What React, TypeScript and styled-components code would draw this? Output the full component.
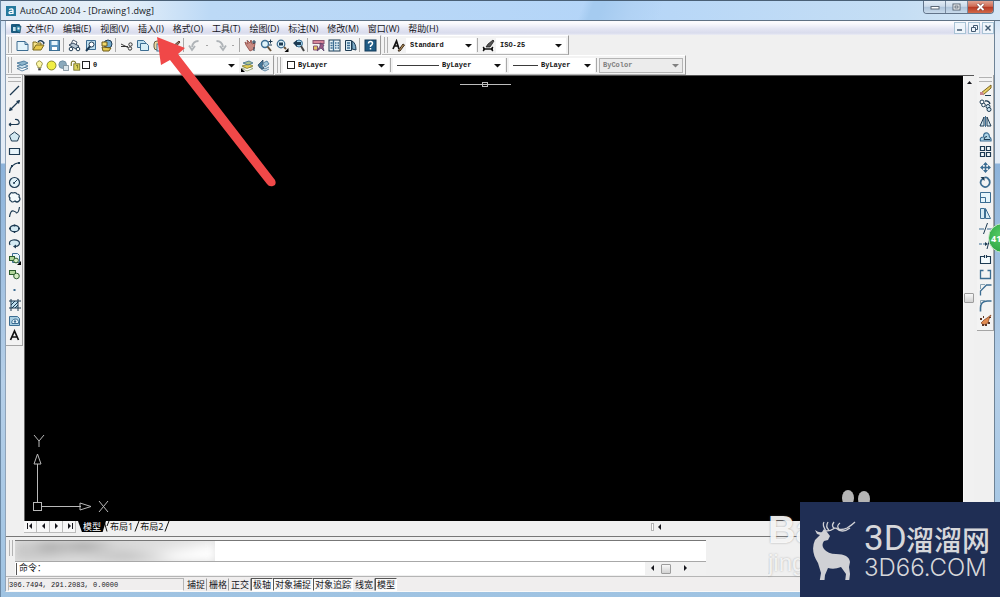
import React from 'react';
import styled, { createGlobalStyle } from 'styled-components';

const GlobalStyle = createGlobalStyle`
  * { box-sizing: border-box; }
  html, body { margin: 0; height: 100%; overflow: hidden; }
  body { font-family: "Open Sans", "Noto Sans CJK SC", sans-serif; color: #16161c; }
  button, select, input { font: inherit; color: inherit; margin: 0; padding: 0; border: 0; background: none; }
  svg { display: block; flex: none; }
`;

const MONO = '"Liberation Mono", "Noto Sans CJK SC", monospace';

const Window = styled.div`
  position: relative;
  min-height: 100vh;
  overflow: hidden;
  display: flex;
  flex-direction: column;
  padding: 0 5px 5px 4px;
  border-top: 1px solid #4a6076;
  border-left: 1px solid #6d8aa6;
  background: linear-gradient(180deg, #b9d7f5 0, #e3ecf6 34px, #e3ecf6 162px, #8db3da 163px, #b5cfe8 380px, #9fc3e2 100%);
`;

const TitleBar = styled.header`
  height: 20px;
  margin: 0 -5px 0 -4px;
  padding: 0 6px 0 5px;
  display: flex;
  align-items: center;
  border-bottom: 1px solid #5f7285;
  background:
    linear-gradient(110deg, transparent 0 58%, #a5cbf0 59% 60%, #b1d2f4 63%, transparent 66%),
    linear-gradient(90deg, #dce9f5 0, #e6f0f9 120px, #bcd9f6 210px, #b4d5f8 60%, #c5def4 90%, #d5e6f5);
`;

const Title = styled.h1`
  margin: 0;
  flex: 1;
  padding-left: 4px;
  font-size: 9px;
  line-height: 18px;
  font-weight: 400;
  color: #14181c;
`;

const CaptionButtons = styled.div`
  display: flex;
  align-self: flex-start;
  height: 13px;
  border: 1px solid #62748a;
  border-top: 0;
  border-radius: 0 0 4px 4px;
  overflow: hidden;
`;

const CaptionButton = styled.button<{ $close?: boolean }>`
  width: ${p => (p.$close ? 25 : 22)}px;
  display: grid;
  place-items: center;
  border-right: ${p => (p.$close ? 0 : 1)}px solid #7a8ba0;
  background: ${p => (p.$close
    ? 'linear-gradient(#e0a392 0, #cf6b54 45%, #b63722 50%, #d0694a 100%)'
    : 'linear-gradient(#e2ecf6 0, #cbdaea 45%, #adc3da 50%, #c9dbec 100%)')};
`;

const Client = styled.div`
  flex: 1;
  display: flex;
  flex-direction: column;
  background: #f0f0f0;
  border-right: 1px solid #6e8396;
  border-left: 1px solid #8fa3b8;
  border-bottom: 1px solid #f9f9f9;
`;

const MenuBar = styled.nav`
  height: 14px;
  display: flex;
  align-items: center;
  gap: 9px;
  padding: 0 0 0 5px;
  font-size: 9px;
  line-height: 13px;
  background: linear-gradient(#fbfbfe 0 2px, #e3e5f3 8px, #d9dced 12px, #ebecf4);
`;

const MenuItem = styled.button`
  white-space: nowrap;
  &:first-of-type { margin-left: -5px; }
`;

const MdiButtons = styled.div`
  margin-left: auto;
  display: flex;
  gap: 2px;
`;

const MdiButton = styled.button`
  width: 12px;
  height: 12px;
  display: grid;
  place-items: center;
  border: 1px solid #a9c3d5;
  background: #eff5fb;
`;

const ToolRow = styled.div`
  display: flex;
  height: 20px;
  gap: 1px;
`;

const Strip = styled.div`
  display: flex;
  align-items: center;
  padding-right: 2px;
  background: #f3f3f3;
  border-top: 1px solid #fff;
  border-right: 1px solid #9b9b9b;
  border-bottom: 1px solid #b4b4b4;
`;

const Grip = styled.span<{ $flat?: boolean }>`
  flex: none;
  ${p => (p.$flat
    ? 'height: 5px; margin: 1px 1px 1px 2px; border-top: 1px solid #b2b2b2; border-bottom: 1px solid #b2b2b2;'
    : 'width: 4px; height: 16px; margin: 0 2px; border-left: 1px solid #b2b2b2; border-right: 1px solid #b2b2b2;')}
`;

const ToolButton = styled.button`
  flex: none;
  width: 16px;
  height: 15px;
  display: grid;
  place-items: center;
`;

const Divider = styled.span`
  flex: none;
  width: 1px;
  height: 14px;
  margin: 0 2px 0 1px;
  background: #a9a9a9;
`;

const FlyDot = styled.span`
  width: 2px;
  height: 1px;
  margin: 0 4px;
  background: #a5a5a5;
`;

const ComboBox = styled.label<{ $width: number; $disabled?: boolean; $tight?: boolean }>`
  width: ${p => p.$width}px;
  height: 15px;
  display: flex;
  align-items: center;
  gap: ${p => (p.$tight ? 1 : 3)}px;
  padding: 0 3px;
  background: ${p => (p.$disabled ? '#ececec' : '#fff')};
  border: 1px solid ${p => (p.$disabled ? '#b5b5b5' : '#fff')};
  color: ${p => (p.$disabled ? '#808080' : '#111')};
`;

const ComboSelect = styled.select<{ $inset?: boolean }>`
  appearance: none;
  flex: 1;
  min-width: 0;
  padding-left: ${p => (p.$inset ? 2 : 0)}px;
  font-family: ${MONO};
  font-size: 7px;
  line-height: 13px;
  font-weight: 600;
  outline: 0;
  opacity: 1;
`;

const Swatch = styled.span`
  width: 8px;
  height: 8px;
  border: 1px solid #222;
  background: #fff;
`;

const LineSample = styled.span<{ $width: number }>`
  width: ${p => p.$width}px;
  height: 1px;
  background: #3b3b3b;
`;

const Workspace = styled.main`
  flex: 1;
  display: flex;
  min-height: 0;
`;

const ToolColumn = styled.div<{ $side: 'left' | 'right' }>`
  flex: none;
  align-self: flex-start;
  width: 17px;
  margin-left: ${p => (p.$side === 'left' ? 0 : 3)}px;
  padding: 1px 0 2px;
  display: flex;
  flex-direction: column;
  background: #f3f3f3;
  border-right: 1px solid #a5a5a5;
  border-bottom: 1px solid #a5a5a5;
`;

const ToolGrid = styled.div<{ $height: number }>`
  height: ${p => p.$height}px;
  display: grid;
  grid-auto-rows: 1fr;
  justify-items: center;
  align-items: center;
`;

const Drawing = styled.section`
  flex: 1;
  min-width: 0;
  display: flex;
  flex-direction: column;
  margin-left: 1px;
  border-top: 1px solid #555;
`;

const View = styled.div`
  flex: 1;
  display: flex;
`;

const Canvas = styled.div`
  position: relative;
  flex: 1;
  background: #000;
  border-left: 1px solid #666;
`;

const Crosshair = styled.svg`
  position: absolute;
  left: 46.4%;
  top: 4px;
`;

const UcsIcon = styled.svg`
  position: absolute;
  left: 4px;
  bottom: 0;
`;

const VScroll = styled.div`
  width: 11px;
  display: flex;
  flex-direction: column;
  align-items: center;
  justify-content: space-between;
  background: #f1f1f1;
  border-left: 1px solid #fafafa;
  padding: 3px 0 11px;
`;

const Thumb = styled.span`
  width: 10px;
  height: 10px;
  border: 1px solid #9d9d9d;
  border-radius: 1px;
  background: linear-gradient(#f8f8f8, #d2d2d2);
`;

const LayoutBar = styled.div`
  height: 12px;
  display: flex;
  align-items: stretch;
  background: #f0f0f0;
  font-size: 9px;
  line-height: 11px;
`;

const NavButton = styled.button`
  width: 13px;
  display: grid;
  place-items: center;
  background: #f7f7f7;
  border-right: 1px solid #bcbcbc;
  border-bottom: 1px solid #bcbcbc;
`;

const LayoutTab = styled.button<{ $active?: boolean }>`
  height: 11px;
  padding: 0 ${p => (p.$active ? 5 : 3)}px;
  margin-left: ${p => (p.$active ? 2 : -3)}px;
  background: ${p => (p.$active ? '#000' : 'transparent')};
  color: ${p => (p.$active ? '#fff' : '#111')};
  clip-path: ${p => (p.$active ? 'polygon(0 0, 100% 0, 88% 100%, 14% 100%)' : 'none')};
`;

const TabEdge = styled.svg`
  margin-left: -3px;
`;

const HScroll = styled.div`
  flex: 0 0 34%;
  margin-left: auto;
  display: flex;
  align-items: center;
  gap: 2px;
`;

const ScrollEdge = styled.span`
  width: 3px;
  height: 8px;
  border: 1px solid #b5b5b5;
  background: #fff;
`;

const CommandDock = styled.section`
  height: 41px;
  margin-top: 3px;
  display: flex;
  border-top: 1px solid #777;
  border-bottom: 1px solid #b5b5b5;
  padding: 3px 0 1px 1px;
  background: #f0f0f0;
`;

const CommandPanel = styled.div`
  flex: 0 0 70%;
  display: flex;
  flex-direction: column;
  border-top: 1px solid #777;
  background: #fff;
  font-family: ${MONO};
  font-size: 9px;
`;

const History = styled.div`
  height: 21px;
  overflow: hidden;
  border-bottom: 1px solid #a8a8a8;
`;

const BlurredLog = styled.div`
  width: 200px;
  height: 100%;
  overflow: hidden;
  background: #e2e2e2;
  &::before {
    content: "";
    display: block;
    height: 100%;
    filter: blur(4px);
    background:
      radial-gradient(ellipse 20px 9px at 35px 5px, #a9a9a9, transparent),
      radial-gradient(ellipse 32px 9px at 68px 4px, #a6a6a6, transparent),
      radial-gradient(ellipse 50px 7px at 110px 16px, #b8b8b8, transparent),
      linear-gradient(165deg, #c9c9c9 30%, #e0e0e0 60%, #fff 85%);
  }
`;

const CommandLine = styled.div`
  flex: 1;
  display: flex;
  align-items: center;
  line-height: 12px;
`;

const CommandLabel = styled.label`
  margin-left: 1px;
  padding-left: 2px;
  border-left: 1px solid #555;
`;

const CommandInput = styled.input`
  flex: 1;
  min-width: 0;
  outline: 0;
`;

const CommandScroll = styled.div`
  width: 61px;
  height: 100%;
  padding: 0 17px 0 4px;
  display: flex;
  align-items: center;
  justify-content: space-between;
  background: #f1f1f1;
`;

const StatusBar = styled.footer`
  height: 14px;
  display: flex;
  align-items: center;
  padding-left: 2px;
  font-size: 9px;
  line-height: 11px;
  background: #f0eeee;
`;

const Coordinates = styled.output`
  width: 176px;
  height: 13px;
  margin-right: 1px;
  font-family: ${MONO};
  font-size: 7px;
  line-height: 12px;
  border: 1px solid #b5b5b5;
  border-bottom-color: #fff;
`;

const StatusToggle = styled.button<{ $on?: boolean }>`
  height: 13px;
  padding: 0 1px;
  white-space: nowrap;
  border: 1px solid ${p => (p.$on ? '#555' : 'transparent')};
  border-right-color: ${p => (p.$on ? '#fff' : '#9d9d9d')};
  border-bottom-color: ${p => (p.$on ? '#fff' : 'transparent')};
  background: ${p => (p.$on ? '#f8f8f8' : 'transparent')};
`;

const PointerArrow = styled.svg`
  position: absolute;
  left: 153px;
  top: 32px;
  pointer-events: none;
`;

const GreenBadge = styled.button`
  position: absolute;
  right: -18px;
  top: 222px;
  width: 30px;
  height: 30px;
  padding-left: 2px;
  text-align: left;
  border-radius: 50%;
  border: 1px solid #c8e8c8;
  background: radial-gradient(circle at 45% 40%, #56cd66, #249b3b);
  color: #fff;
  font-size: 9px;
  font-weight: 700;
`;

const Watermark = styled.div`
  position: absolute;
  right: 200px;
  bottom: 19px;
  width: 32px;
  overflow: hidden;
  font-family: "Liberation Sans", sans-serif;
`;

const WatermarkName = styled.div`
  font-size: 38px;
  line-height: 36px;
  font-weight: 700;
  color: rgba(255, 255, 255, 0.9);
  text-shadow: 0 0 2px rgba(110, 110, 110, 0.6);
`;

const WatermarkSub = styled.div`
  font-size: 24px;
  line-height: 30px;
  color: rgba(255, 255, 255, 0.8);
  text-shadow: 0 0 2px rgba(110, 110, 110, 0.5);
`;

const Paws = styled.svg`
  position: absolute;
  right: 129px;
  bottom: 93px;
`;

const Brand = styled.aside`
  position: absolute;
  right: 0;
  bottom: 0;
  width: 200px;
  height: 95px;
  display: flex;
  align-items: center;
  padding: 0 8px 0 12px;
  gap: 8px;
  background: #1f2e54;
  color: #d6d7da;
`;

const BrandText = styled.div`
  display: flex;
  flex-direction: column;
  padding-top: 4px;
`;

const BrandName = styled.div`
  display: flex;
  align-items: center;
  height: 32px;
  font-family: "Noto Sans CJK SC", sans-serif;
  font-size: 28px;
  line-height: 32px;
  font-weight: 500;
  white-space: nowrap;
`;

const BrandLatin = styled.span`
  width: 42px;
  font-family: Roboto, sans-serif;
  font-size: 35px;
  font-weight: 400;
`;

const BrandUrl = styled.div`
  font-family: Inter, sans-serif;
  font-size: 24px;
  line-height: 26px;
  font-weight: 300;
`;

const navy = '#1d3a52';
const steel = '#3c6d92';
const pale = '#bfe0f0';

const glyphs: Record<string, React.ReactNode> = {
  new: <><path d="M1 2.500h8l3 3v6H1z" fill="#e4f4fb" stroke={steel} /><path d="M9 2.500v3h3" fill="none" stroke={steel} /></>,
  open: <><path d="M1 11V3h3l1 1h4v3" fill="#f4e28a" stroke="#7c6b1d" /><path d="M1 11l3-5h8l-3 5z" fill="#e7c84a" stroke="#7c6b1d" /><path d="M6 3q3-3 6 1l-1 1" fill="none" stroke={navy} strokeWidth="1.300" /></>,
  save: <><rect x="1.500" y="1.500" width="10" height="10" fill="#5b93bd" stroke={steel} /><rect x="3.500" y="2" width="6" height="4" fill="#e9f5fb" /><rect x="4" y="8" width="5" height="3" fill="#fff" /></>,
  print: <><path d="M3 5L5 1l4 2-1 3" fill="#fff" stroke="#4c5b6d" /><path d="M1 6l4-2 6 3-3 3z" fill="#b8c8d4" stroke="#394b60" /><circle cx="3" cy="10" r="1.800" fill="#fff" stroke={navy} /><circle cx="10" cy="10" r="1.800" fill="#fff" stroke={navy} /></>,
  preview: <><path d="M2.500 1.500h9v9h-9z" fill={pale} stroke={steel} /><circle cx="7.500" cy="5.500" r="2.500" fill="#fff" stroke={navy} /><path d="M6 7.500L2 12" stroke={navy} strokeWidth="2" /></>,
  publish: <><circle cx="8" cy="5" r="4" fill="#6fa8cb" stroke={navy} /><path d="M2 3h5v4H2z" fill="#f0d96b" stroke="#6c5a1a" /><path d="M2 8l9 1-2 3H3z" fill="#e6ca4e" stroke="#6c5a1a" /></>,
  cut: <><path d="M1 5l7 3.500M1 7.500h7" stroke="#333" fill="none" /><circle cx="10.500" cy="5.500" r="1.700" fill="none" stroke="#333" /><circle cx="10" cy="9.500" r="1.700" fill="none" stroke="#333" /></>,
  copy: <><path d="M1.500 1.500h6l2 2v5h-8z" fill={pale} stroke={steel} /><path d="M4.500 4.500h6l2 2v5h-8z" fill="#d8eff8" stroke={steel} /></>,
  paste: <><rect x="2" y="2" width="8" height="9" rx="3" fill="#ead9a0" stroke="#655b44" /><rect x="5" y="5" width="7" height="7" fill="#e9f6fc" stroke={steel} /></>,
  match: <><path d="M4 8l7-6 1 1-6 7z" fill="#8b7b6c" stroke="#5b3b2c" /><path d="M1 11l3-3 2 2z" fill="#c4513b" /></>,
  undo: <path d="M10.500 2Q5 2 4 8M1 6.500L4 11l3-4" fill="none" stroke="#aeb3b7" strokeWidth="1.800" />,
  redo: <path d="M2.500 2Q8 2 9 8M12 6.500L9 11 6 7" fill="none" stroke="#aeb3b7" strokeWidth="1.800" />,
  pan: <><path d="M2 6L1 3l3 2-1-4 3 3 1-3 1 4 3-1-1 6-4 2z" fill="#c98a82" stroke="#9c5a54" /><path d="M10 1v4M8 3h4M10 8v4" stroke={navy} /></>,
  zoomRt: <><circle cx="5" cy="5" r="3.500" fill="#dff3fa" stroke={steel} strokeWidth="1.400" /><path d="M7.500 7.500L11 12" stroke="#69543c" strokeWidth="2" /><path d="M8.500 2.500h4M10.500 .5v4M9 6h3" stroke={navy} /></>,
  zoomWin: <><circle cx="5" cy="5" r="3.800" fill="#dff3fa" stroke={steel} strokeWidth="1.200" /><rect x="3" y="3.500" width="4" height="3" fill={navy} /><path d="M8 8l2 2" stroke="#69543c" strokeWidth="2" /><path d="M12.500 9v4h-4z" fill="#000" /></>,
  zoomPrev: <><circle cx="7" cy="4.500" r="3.500" fill="#9fd0e6" stroke={steel} /><path d="M9 7l3 5" stroke="#444" strokeWidth="2" /><path d="M1 4l4-3v2h4v3H5v2z" fill={navy} /></>,
  props: <><rect x="1" y="1.500" width="11" height="3" fill="#d8869a" stroke="#8a5470" /><path d="M1.500 7h4v4h-4z" fill="#e2c263" stroke="#8a5470" /><path d="M8 4l4 2-1 2 1 4-3-3-4 3 3-5z" fill="#9c5a84" stroke="#4c3a64" strokeWidth=".7" /></>,
  design: <><rect x="1" y="1" width="11" height="11" fill="#e7f3f8" stroke={navy} /><path d="M5.500 1v11M2.500 4h2M7 4h1.500M9.500 4H11M2.500 6.500h2M7 6.500h1.500M9.500 6.500H11M2.500 9h2M7 9h1.500M9.500 9H11" stroke={steel} strokeWidth="1.300" /></>,
  palettes: <><path d="M1.500 1.500h6v10h-6z" fill="#d6eaf3" stroke={navy} /><path d="M3 4h3M3 6.500h3M3 9h3" stroke={steel} strokeWidth="1.300" /><path d="M8 2q4 2 4 9l-4-1z" fill="#7aaac7" stroke={navy} /></>,
  help: <><rect x="1" y="1" width="11" height="11" fill="#1f5c86" stroke="#143a58" /><path d="M4.500 4.500q0-2 2-2t2 2q0 1.200-2 2.500v1M6.500 9v1.500" fill="none" stroke="#fff" strokeWidth="1.500" /></>,
  textStyle: <><path d="M1 10L4.500 2l2.500 8M2.500 7h4" fill="none" stroke="#111" strokeWidth="1.700" /><path d="M6 12l5-7 1.500 1L8 12z" fill="#b9935b" stroke="#3c2c1c" /></>,
  dimStyle: <><path d="M1 10h10M1 12l2-2-2-2M11 12L9 10l2-2" stroke="#111" fill="none" strokeWidth="1.300" /><path d="M4 8l2-3 5-4 1 1-4 6z" fill="#555" stroke="#111" strokeWidth=".7" /></>,
  layers: <><path d="M1 9.500l5 2.500 6-2.500L8 8z" fill="#fff" stroke={steel} strokeWidth=".8" /><path d="M1 7l5 2.500L12 7 8 5z" fill="#cfe3ee" stroke={steel} strokeWidth=".8" /><path d="M1 4l5 2.500L12 4 8 2z" fill="#8db5cc" stroke={steel} strokeWidth=".8" /></>,
  layerMake: <><path d="M1 9.500l5 2.500 6-2.500L8 8z" fill="#fff" stroke="#8b9a6c" strokeWidth=".8" /><path d="M1 7l5 2.500L12 7 8 5z" fill="#e4cc53" stroke="#7f7b31" strokeWidth=".8" /><path d="M2 4l5 2 5-2-4-2z" fill="#aac18c" stroke={steel} strokeWidth=".8" /><path d="M0 9v4h4z" fill="#000" /></>,
  layerPrev: <><path d="M4 10l4 2 4-2M4 8l4 2 4-2" fill="#dbeaf2" stroke={steel} strokeWidth=".8" /><path d="M1 6l5-5v2q-2 4 1 6l-2 1q-3-1-4-4z" fill="#48789a" stroke={navy} strokeWidth=".7" /><path d="M6 4l4-2 2 3-4 3z" fill="#a5c7da" stroke={steel} strokeWidth=".8" /></>,
  bulb: <><path d="M4.500 9V7.500Q2.500 6 3 3.500 4.500 1 6.500 1q3 1 3.500 3.500L8.500 7.500V9z" fill="#fcf6a5" stroke="#8d8737" /><path d="M5 11h3" stroke="#444" strokeWidth="2.500" /></>,
  sun: <circle cx="6.500" cy="6.500" r="5.300" fill="#f1ee45" stroke="#77741d" />,
  freeze: <><circle cx="5.500" cy="5.500" r="4.500" fill="#8aa9bc" stroke="#6a899f" /><path d="M6.500 6.500h6v6h-6z" fill="#dbe6ec" stroke="#778996" /></>,
  lock: <><path d="M1.500 7V4q0-3 3-2.500 2.500 .5 2 2.500" fill="none" stroke="#807b2d" strokeWidth="1.400" /><rect x="4.500" y="4.500" width="7" height="7.500" fill="#ddd65c" stroke="#6d6926" /><path d="M7 7l2-1v4" stroke="#6d6926" fill="none" /></>,
  line: <path d="M2 11L11 2" stroke={navy} strokeWidth="1.200" />,
  xline: <><path d="M1.500 11.500L11.500 1.500" stroke={navy} strokeWidth="1.200" /><path d="M1 12l1-4 3 3zM12 1l-4 1 3 3z" fill={navy} /></>,
  pline: <path d="M1 9.500h7q4 0 3-3-1-2.500-4-2M1 9.500l2-1.500M1 9.500L3 11" fill="none" stroke={navy} strokeWidth="1.200" />,
  polygon: <path d="M6.500 2l5 3.800-2 5.200h-6l-2-5.200z" fill="#d3e9f2" stroke={navy} />,
  rect: <path d="M1.500 3.500h10v6h-10z" fill="#e7f4fa" stroke={navy} strokeWidth="1.200" />,
  arc: <><path d="M1.500 12Q2 3 11.500 1.500" fill="none" stroke={navy} strokeWidth="1.200" /><rect x="3" y="4" width="2" height="2" fill={navy} /><rect x="10" y="1" width="2" height="2" fill={navy} /></>,
  circle: <><circle cx="6.500" cy="6.500" r="5" fill="#e2f2f8" stroke={navy} strokeWidth="1.200" /><path d="M6 7l3.500-3.500" stroke={navy} /><circle cx="6" cy="7" r="1" fill={navy} /></>,
  cloud: <path d="M2 3q1-2 3-1 3-1 4 1 3 0 2 3 2 2 0 4-2 2-4 0-3 2-4 0-2-1-1-3-2-2 0-4z" fill="#f4fafc" stroke={navy} strokeWidth="1.200" />,
  spline: <path d="M1.500 11q1-7 4-6t3 2q2 0 3-6" fill="none" stroke={navy} strokeWidth="1.200" />,
  ellipse: <><ellipse cx="6.500" cy="6.500" rx="4.500" ry="3.200" fill="#d4eaf3" stroke={navy} strokeWidth="1.300" /><path d="M1 6.500h2M10 6.500h2M6.500 2.500v2M6.500 9v2" stroke={navy} strokeWidth="1.500" /></>,
  ellArc: <><path d="M2 8Q0 4 5 3q6-.5 6.500 3 0 3-4 3.500" fill="#d4eaf3" stroke={navy} strokeWidth="1.200" /><path d="M8 7.500L5 9.500 8 11.500z" fill={navy} /></>,
  insert: <><path d="M4.500 1.500h5l2 2v7h-7z" fill="#e8f5fa" stroke={steel} /><rect x="1.500" y="4.500" width="5" height="4" fill="#b1d59a" stroke="#2b5c2b" /><circle cx="8" cy="8.500" r="2.400" fill="#d6ecc4" stroke="#2b5c2b" /><path d="M13 9v4H9z" fill="#000" /></>,
  block: <><rect x="1.500" y="2.500" width="6" height="4" fill="#b1d59a" stroke="#2b5c2b" /><circle cx="8.500" cy="8" r="2.800" fill="#d6ecc4" stroke="#2b5c2b" /></>,
  point: <rect x="5.500" y="6" width="2" height="2" fill={steel} />,
  hatch: <><rect x="3" y="3" width="7" height="7" fill={pale} /><path d="M1 3h12M1 10h12M3 1v12M10 1v12M3 7l4-4M4 10l6-6M7 10l3-3" stroke={navy} fill="none" /></>,
  region: <><path d="M1.500 2.500h8l2 2v7h-10z" fill="#a8cee2" stroke={steel} /><path d="M4 9.500Q3 6 7 5q4 0 3.500 4.500z" fill="#edf8fc" stroke={steel} /><circle cx="7" cy="7.500" r="1.200" fill={steel} /></>,
  mtext: <path d="M2.500 11L6.500 2l4 9M4 8h5" fill="none" stroke="#111" strokeWidth="1.700" />,
  erase: <><path d="M2 9l2 2 8-7V1z" fill="#e9cf62" stroke="#7d6520" /><path d="M1 8h3l1 3H1z" fill="#c9858f" /><path d="M6 11.500h6" stroke={navy} /></>,
  copyObj: <><circle cx="3" cy="3" r="2" fill="#fff" stroke={navy} /><circle cx="4.500" cy="6" r="1.800" fill="#fff" stroke={navy} /><circle cx="9" cy="7.500" r="2" fill="#cfe6f2" stroke={navy} /><circle cx="10" cy="10.500" r="2" fill="#cfe6f2" stroke={navy} /><path d="M6 2q4-1 5 3" fill="none" stroke={navy} strokeWidth="1.300" /></>,
  mirror: <><path d="M5 2v9H1zM8 2v9h4z" fill="#d0e6f0" stroke={navy} /><path d="M6.500 1v11" stroke={steel} /></>,
  offset: <><path d="M1.500 11q-1-4 3-4 0-5 4-4 2 1 2 4 2 1 1.500 4z" fill="#aed4e7" stroke={steel} strokeWidth="1.200" /><path d="M5 9.500q0-3 3-3M5 9.500h6" stroke={navy} fill="none" /></>,
  array: <path d="M1.500 1.500h4v4h-4zM7.500 1.500h4v4h-4zM1.500 7.500h4v4h-4zM7.500 7.500h4v4h-4z" fill="#f4fafc" stroke={navy} strokeWidth="1.200" />,
  move: <><path d="M6.500 2v9M2 6.500h9" stroke={steel} strokeWidth="1.500" /><path d="M6.500 1L9 4H4zM6.500 12L4 9h5zM1 6.500L4 4v5zM12 6.500L9 9V4z" fill={steel} /></>,
  rotate: <><path d="M4 2.500q-4 3-1.500 6.500 3.500 4 7 .5 3-4-1-7.500-1-1-3-.5" fill="none" stroke={steel} strokeWidth="1.700" /><path d="M1.500 1h4v4z" fill={navy} /></>,
  scale: <path d="M1.500 1.500h10v10h-10zM1.500 6.500h5v5h-5z" fill="#e6f4fa" stroke={steel} />,
  stretch: <path d="M1.500 1.500h4v10h-4zM6.500 1.500l5 10h-5z" fill="#d6eaf3" stroke={steel} />,
  trim: <><path d="M0 7h5M8 7h5" stroke={steel} strokeWidth="1.200" /><path d="M4.500 12L8.500 1" stroke={navy} /></>,
  extend: <><path d="M0 7h8" stroke={steel} strokeWidth="1.200" strokeDasharray="3 1" /><path d="M8 12l3-11" stroke={navy} /><path d="M6 5l3 2-3 2z" fill={navy} /></>,
  breakPt: <path d="M5.500 3.500h-4v7h10v-7h-4M5.500 2v3M7.500 2v3" fill="#f4fafc" stroke={navy} strokeWidth="1.100" />,
  breakObj: <path d="M4.500 2.500h-3v8h10v-8h-3" fill="none" stroke={steel} strokeWidth="1.300" />,
  chamfer: <><path d="M1.500 12.500V8l6-6h5" fill="none" stroke={steel} strokeWidth="1.300" /><path d="M1.500 6V1.500H6" fill="none" stroke="#8ba4b3" /></>,
  fillet: <><path d="M1.500 12.500V9q0-7 7-7h4" fill="none" stroke={steel} strokeWidth="1.600" /><path d="M1.500 6V1.500H6" fill="none" stroke="#8ba4b3" /></>,
  explode: <><path d="M5 6l3-2 4-3-2 4-1 4-4 2-3-2z" fill="#e08a4f" stroke="#8d4c2c" strokeWidth=".8" /><path d="M1 4h2v2H1zM4 2h1v2H4zM9 8h2v2H9zM3 10h2v2H3zM6 10h2v2H6zM10 3h2v1h-2z" fill="#5c3526" /></>,
};

function Icon({ name, size = 13 }: { name: string; size?: number }) {
  return <svg width={size} height={size} viewBox="0 0 13 13" aria-hidden="true">{glyphs[name]}</svg>;
}

function Tool({ name, label }: { name: string; label: string }) {
  return <ToolButton type="button" aria-label={label}><Icon name={name} /></ToolButton>;
}

function Tri({ dir, bar }: { dir: 'left' | 'right' | 'up' | 'down'; bar?: boolean }) {
  const d = { left: 'M5 0v6L2 3z', right: 'M2 0v6l3-3z', up: 'M1 5h5L3.500 2z', down: 'M0 2h7L3.500 5.500z' }[dir];
  return (
    <svg width="7" height="7" viewBox="0 0 7 7" aria-hidden="true">
      <path d={d} fill="currentColor" />
      {bar && <path d={dir === 'left' ? 'M.5 0v6' : 'M6.500 0v6'} stroke="currentColor" />}
    </svg>
  );
}

interface ComboProps { label: string; value: string; width: number; disabled?: boolean; tight?: boolean; children?: React.ReactNode }

function Combo({ label, value, width, disabled, tight, children }: ComboProps) {
  return (
    <ComboBox $width={width} $disabled={disabled} $tight={tight}>
      {children}
      <ComboSelect aria-label={label} disabled={disabled} defaultValue={value} $inset={tight}>
        <option>{value}</option>
      </ComboSelect>
      <Tri dir="down" />
    </ComboBox>
  );
}

const menus = ['文件(F)', '编辑(E)', '视图(V)', '插入(I)', '格式(O)', '工具(T)', '绘图(D)', '标注(N)', '修改(M)', '窗口(W)', '帮助(H)'];

const drawTools: [string, string][] = [
  ['line', '直线'], ['xline', '构造线'], ['pline', '多段线'], ['polygon', '正多边形'], ['rect', '矩形'], ['arc', '圆弧'],
  ['circle', '圆'], ['cloud', '修订云线'], ['spline', '样条曲线'], ['ellipse', '椭圆'], ['ellArc', '椭圆弧'], ['insert', '插入块'],
  ['block', '创建块'], ['point', '点'], ['hatch', '图案填充'], ['region', '面域'], ['mtext', '多行文字'],
];

const modifyTools: [string, string][] = [
  ['erase', '删除'], ['copyObj', '复制'], ['mirror', '镜像'], ['offset', '偏移'], ['array', '阵列'], ['move', '移动'],
  ['rotate', '旋转'], ['scale', '缩放'], ['stretch', '拉伸'], ['trim', '修剪'], ['extend', '延伸'], ['breakPt', '打断于点'],
  ['breakObj', '打断'], ['chamfer', '倒角'], ['fillet', '圆角'], ['explode', '分解'],
];

const toggles: [string, boolean][] = [
  ['捕捉', false], ['栅格', false], ['正交', false], ['极轴', true], ['对象捕捉', true], ['对象追踪', true], ['线宽', false], ['模型', true],
];

function Deer() {
  return (
    <svg width="44" height="60" viewBox="0 0 44 60" aria-hidden="true">
      <path d="M3 10q4 3 7 2l2-3 3 3 3 4-2 4-4 1q-3 4 0 8 4 5 12 5 13 0 14 8l-1 5 1 7-1 8h-4l1-8-5-7q-7 3-13 1l-3 7-1 10H7l2-12-3-10Q-2 31 3 20l5-5-3-1z" fill="#d0d1d5" />
      <path d="M14 11Q10 5 12 2M14 11q5 0 9-3 6 3 12 0 5-3 8-6M17 10q-4-3-1-8M22 8q-3-2 0-6M27 9q-3-3 1-6M24 8q6 6 14 0" fill="none" stroke="#d0d1d5" strokeWidth="1.300" />
    </svg>
  );
}

export default function App() {
  return (
    <Window>
      <GlobalStyle />
      <TitleBar>
        <svg width="10" height="10" viewBox="0 0 10 10" aria-hidden="true">
          <rect width="10" height="10" fill="#247a9e" />
          <path d="M3 3.500q4-1.500 4 1V8M7 5.500q-4-.5-4 1.200T7 7" fill="none" stroke="#fff" strokeWidth="1.300" />
        </svg>
        <Title>AutoCAD 2004 - [Drawing1.dwg]</Title>
        <CaptionButtons>
          <CaptionButton type="button" aria-label="最小化">
            <svg width="10" height="5"><rect x="1" y="1.500" width="8" height="2.500" fill="#fff" stroke="#5c6876" /></svg>
          </CaptionButton>
          <CaptionButton type="button" aria-label="还原">
            <svg width="9" height="8"><rect x="1" y="1" width="7" height="6" fill="#fff" stroke="#5c6876" /><rect x="3" y="3" width="3" height="2" fill="none" stroke="#5c6876" /></svg>
          </CaptionButton>
          <CaptionButton type="button" $close aria-label="关闭">
            <svg width="9" height="8"><path d="M1.500 1l6 6M7.500 1l-6 6" stroke="#6b3a38" strokeWidth="3" /><path d="M1.500 1l6 6M7.500 1l-6 6" stroke="#fff" strokeWidth="1.800" /></svg>
          </CaptionButton>
        </CaptionButtons>
      </TitleBar>

      <Client>
        <MenuBar>
          <svg width="11" height="11" viewBox="0 0 11 11" aria-hidden="true">
            <rect width="9" height="9" x="0" y="1" rx="1" fill="#1d5c80" />
            <path d="M2 4h5v4H2z" fill="#bfe1ee" /><path d="M5 2l5 1-1 7-4-2z" fill="#2c83a8" stroke="#123d56" strokeWidth=".6" /><path d="M6.500 4.500h2v2h-2z" fill="#fff" />
          </svg>
          {menus.map(m => <MenuItem type="button" key={m}>{m}</MenuItem>)}
          <MdiButtons>
            <MdiButton type="button" aria-label="最小化文档"><svg width="6" height="6"><path d="M0 5h5" stroke="#425a72" strokeWidth="1.500" /></svg></MdiButton>
            <MdiButton type="button" aria-label="还原文档"><svg width="7" height="7"><path d="M2.500 2V.5h4v4H5M.5 2.500h4v4h-4z" fill="none" stroke="#425a72" /></svg></MdiButton>
            <MdiButton type="button" aria-label="关闭文档"><svg width="6" height="6"><path d="M.5.5l5 5M5.500.5l-5 5" stroke="#425a72" strokeWidth="1.400" /></svg></MdiButton>
          </MdiButtons>
        </MenuBar>

        <ToolRow>
          <Strip>
            <Grip />
            <Tool name="new" label="新建" /><Tool name="open" label="打开" /><Tool name="save" label="保存" />
            <Divider />
            <Tool name="print" label="打印" /><Tool name="preview" label="打印预览" /><Tool name="publish" label="发布" />
            <Divider />
            <Tool name="cut" label="剪切" /><Tool name="copy" label="复制到剪贴板" /><Tool name="paste" label="粘贴" /><Tool name="match" label="特性匹配" />
            <Divider />
            <Tool name="undo" label="放弃" /><FlyDot /><Tool name="redo" label="重做" /><FlyDot />
            <Divider />
            <Tool name="pan" label="实时平移" /><Tool name="zoomRt" label="实时缩放" /><Tool name="zoomWin" label="窗口缩放" /><Tool name="zoomPrev" label="缩放上一个" />
            <Divider />
            <Tool name="props" label="特性" /><Tool name="design" label="设计中心" /><Tool name="palettes" label="工具选项板" />
            <Divider />
            <Tool name="help" label="帮助" />
          </Strip>
          <Strip>
            <Grip />
            <Tool name="textStyle" label="文字样式" />
            <Combo label="文字样式" value="Standard" width={70} />
            <Divider />
            <Tool name="dimStyle" label="标注样式" />
            <Combo label="标注样式" value="ISO-25" width={70} />
          </Strip>
        </ToolRow>

        <ToolRow>
          <Strip>
            <Grip />
            <Tool name="layers" label="图层特性管理器" />
            <Combo label="图层" value="0" width={209} tight>
              <Icon name="bulb" size={11} /><Icon name="sun" size={11} /><Icon name="freeze" size={11} /><Icon name="lock" size={11} /><Swatch />
            </Combo>
            <Tool name="layerMake" label="置为当前图层" /><Tool name="layerPrev" label="上一个图层" />
          </Strip>
          <Strip>
            <Grip />
            <Combo label="颜色" value="ByLayer" width={106}><Swatch /></Combo>
            <Divider />
            <Combo label="线型" value="ByLayer" width={112}><LineSample $width={42} /></Combo>
            <Divider />
            <Combo label="线宽" value="ByLayer" width={86}><LineSample $width={25} /></Combo>
            <Divider />
            <Combo label="打印样式" value="ByColor" width={84} disabled />
          </Strip>
        </ToolRow>

        <Workspace>
          <ToolColumn $side="left">
            <Grip $flat />
            <ToolGrid $height={260}>{drawTools.map(([n, l]) => <Tool key={n} name={n} label={l} />)}</ToolGrid>
          </ToolColumn>

          <Drawing>
            <View>
              <Canvas>
                <Crosshair width="52" height="9" viewBox="0 0 52 9" fill="none" stroke="#bdbdbd">
                  <path d="M0 4.500h51" /><rect x="22.500" y="2.500" width="5" height="4" />
                </Crosshair>
                <UcsIcon width="90" height="90" viewBox="0 0 90 90" fill="none" stroke="#b9b9b9">
                  <path d="M8.500 71.500V33M13 75.500h39M8.500 23l-3.500 10h7zM62 75.500L51 72v7z" />
                  <rect x="4.500" y="71.500" width="8" height="8" />
                  <path d="M5 4l5 6 5-6M10 10v6M70 70l9 11M79 70l-9 11" />
                </UcsIcon>
              </Canvas>
              <VScroll><Tri dir="up" /><Thumb /><span /></VScroll>
            </View>
            <LayoutBar>
              <NavButton type="button" aria-label="第一个"><Tri dir="left" bar /></NavButton>
              <NavButton type="button" aria-label="上一个"><Tri dir="left" /></NavButton>
              <NavButton type="button" aria-label="下一个"><Tri dir="right" /></NavButton>
              <NavButton type="button" aria-label="最后一个"><Tri dir="right" bar /></NavButton>
              <LayoutTab type="button" $active>模型</LayoutTab>
              <TabEdge width="7" height="11"><path d="M1 0l3 10.500M6 0L4 5" stroke="#111" fill="none" /></TabEdge>
              <LayoutTab type="button">布局1</LayoutTab>
              <TabEdge width="7" height="11"><path d="M6 0L2 10.500" stroke="#111" fill="none" /></TabEdge>
              <LayoutTab type="button">布局2</LayoutTab>
              <TabEdge width="7" height="11"><path d="M6 0L2 10.500" stroke="#111" fill="none" /></TabEdge>
              <HScroll><ScrollEdge /><Tri dir="left" /></HScroll>
            </LayoutBar>
          </Drawing>

          <ToolColumn $side="right">
            <Grip $flat />
            <ToolGrid $height={245}>{modifyTools.map(([n, l]) => <Tool key={n} name={n} label={l} />)}</ToolGrid>
          </ToolColumn>
        </Workspace>

        <CommandDock>
          <Grip />
          <CommandPanel>
            <History><BlurredLog /></History>
            <CommandLine>
              <CommandLabel htmlFor="command">命令：</CommandLabel>
              <CommandInput id="command" type="text" autoComplete="off" />
              <CommandScroll><Tri dir="left" /><Thumb /><span /><Tri dir="right" /></CommandScroll>
            </CommandLine>
          </CommandPanel>
        </CommandDock>

        <StatusBar>
          <Coordinates>306.7494,&nbsp;291.2083,&nbsp;0.0000</Coordinates>
          {toggles.map(([t, on]) => <StatusToggle type="button" key={t} $on={on} aria-pressed={on}>{t}</StatusToggle>)}
        </StatusBar>
      </Client>

      <PointerArrow width="126" height="156" viewBox="0 0 126 156" aria-hidden="true">
        <path d="M3 4L31 15 24 21 121 147Q123 152 119 153 115 154 113 151L16 27 7 32z" fill="#f04848" />
      </PointerArrow>
      <GreenBadge type="button">41</GreenBadge>
      <Watermark>
        <WatermarkName>Ba</WatermarkName>
        <WatermarkSub>jing</WatermarkSub>
      </Watermark>
      <Paws width="30" height="14" fill="#b4b4b4" aria-hidden="true"><ellipse cx="7" cy="8" rx="6" ry="8" /><ellipse cx="23" cy="9" rx="6" ry="8" /></Paws>
      <Brand>
        <Deer />
        <BrandText>
          <BrandName><BrandLatin>3D</BrandLatin>溜溜网</BrandName>
          <BrandUrl>3D66.COM</BrandUrl>
        </BrandText>
      </Brand>
    </Window>
  );
}
